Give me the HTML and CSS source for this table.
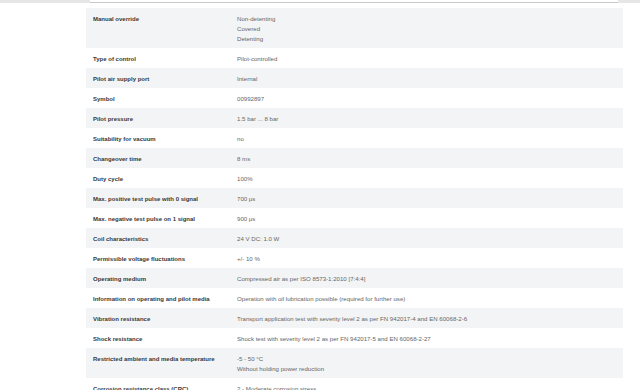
FILE: index.html
```html
<!DOCTYPE html>
<html lang="en">
<head>
<meta charset="utf-8">
<title>Technical data</title>
<link rel="stylesheet" href="styles.css">
</head>
<body>
<div class="topbar"><div class="topcard"></div></div>
<div class="specs">
  <div class="row"><div class="label">Manual override</div><div class="value">Non-detenting<br>Covered<br>Detenting</div></div>
  <div class="row"><div class="label">Type of control</div><div class="value">Pilot-controlled</div></div>
  <div class="row"><div class="label">Pilot air supply port</div><div class="value">Internal</div></div>
  <div class="row"><div class="label">Symbol</div><div class="value">00992897</div></div>
  <div class="row"><div class="label">Pilot pressure</div><div class="value">1.5 bar ... 8 bar</div></div>
  <div class="row"><div class="label">Suitability for vacuum</div><div class="value">no</div></div>
  <div class="row"><div class="label">Changeover time</div><div class="value">8 ms</div></div>
  <div class="row"><div class="label">Duty cycle</div><div class="value">100%</div></div>
  <div class="row"><div class="label">Max. positive test pulse with 0 signal</div><div class="value">700 µs</div></div>
  <div class="row"><div class="label">Max. negative test pulse on 1 signal</div><div class="value">900 µs</div></div>
  <div class="row"><div class="label">Coil characteristics</div><div class="value">24 V DC: 1.0 W</div></div>
  <div class="row"><div class="label">Permissible voltage fluctuations</div><div class="value">+/- 10 %</div></div>
  <div class="row"><div class="label">Operating medium</div><div class="value">Compressed air as per ISO 8573-1:2010 [7:4:4]</div></div>
  <div class="row"><div class="label">Information on operating and pilot media</div><div class="value">Operation with oil lubrication possible (required for further use)</div></div>
  <div class="row"><div class="label">Vibration resistance</div><div class="value">Transport application test with severity level 2 as per FN 942017-4 and EN 60068-2-6</div></div>
  <div class="row"><div class="label">Shock resistance</div><div class="value">Shock test with severity level 2 as per FN 942017-5 and EN 60068-2-27</div></div>
  <div class="row"><div class="label">Restricted ambient and media temperature</div><div class="value">-5 - 50 °C<br>Without holding power reduction</div></div>
  <div class="row"><div class="label">Corrosion resistance class (CRC)</div><div class="value">2 - Moderate corrosion stress</div></div>
</div>
</body>
</html>
```
FILE: styles.css
```css
html, body {
  margin: 0;
  padding: 0;
  background: #ffffff;
}
body {
  font-family: "Liberation Sans", Arial, sans-serif;
  font-size: 6px;
  color: #555;
  width: 640px;
  height: 390px;
  overflow: hidden;
}
.topbar {
  height: 3px;
  background: #e6e6e6;
}
.topcard {
  margin-left: 90px;
  width: 528px;
  height: 2px;
  background: #fff;
  border-bottom: 1px solid #c9c9c9;
}
.specs {
  margin: 5px 17px 0 86px;
}
.row {
  display: grid;
  grid-template-columns: 144px 1fr;
  line-height: 10px;
  padding: 6px 0 4px;
}
.row:nth-child(odd) {
  background: #f3f4f5;
}
.label {
  padding-left: 7px;
  font-weight: bold;
  color: #383838;
}
.value {
  padding-left: 7px;
  font-size: 6.1px;
  color: #666;
}
```
